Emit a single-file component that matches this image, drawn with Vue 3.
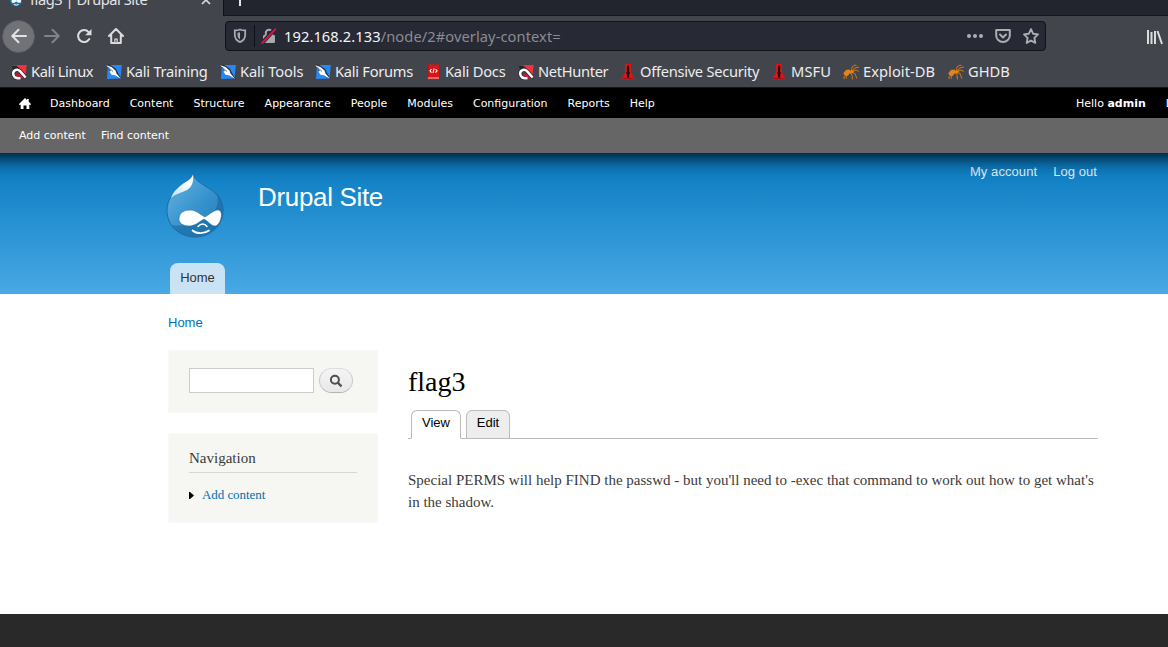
<script setup>
const bookmarks = [
  { label: 'Kali Linux', icon: 'dragon', width: 95, tracking: -0.38 },
  { label: 'Kali Training', icon: 'blade', width: 114, tracking: -0.25 },
  { label: 'Kali Tools', icon: 'blade', width: 95, tracking: -0.1 },
  { label: 'Kali Forums', icon: 'blade', width: 110, tracking: -0.27 },
  { label: 'Kali Docs', icon: 'book', width: 93, tracking: -0.2 },
  { label: 'NetHunter', icon: 'dragon', width: 102, tracking: -0.33 },
  { label: 'Offensive Security', icon: 'tower', width: 151, tracking: -0.28 },
  { label: 'MSFU', icon: 'tower', width: 72, tracking: 0.1 },
  { label: 'Exploit-DB', icon: 'ant', width: 105, tracking: 0.06 },
  { label: 'GHDB', icon: 'ant', width: 62, tracking: 0 },
]
const adminLinks = ['Dashboard', 'Content', 'Structure', 'Appearance', 'People', 'Modules', 'Configuration', 'Reports', 'Help']
</script>

<template>
  <div class="window">
    <div class="tabstrip">
      <div class="tab">
        <svg class="favicon" width="16" height="16" viewBox="0 0 16 16">
          <path d="M8 0C8 3 2 4 2 9.200a6 6 0 0 0 12 0C14 4 8 3 8 0z" fill="#1278b8" />
          <path d="M3.500 10c0-2 2.500-2 4.700-.5 2-1.500 4.800-2 4.800.5 0 2.500-2.500 2.200-4.700.5C6 12.500 3.500 12.500 3.500 10z" fill="#fff" />
          <path d="M6 13.500q2.500 1.200 4.500 0" stroke="#fff" fill="none" />
        </svg>
        <span class="tab-title">flag3 | Drupal Site</span>
        <svg class="close" width="10" height="10" viewBox="0 0 10 10"><path d="M1 1l8 8M9 1L1 9" stroke="#d9d9da" stroke-width="1.700" /></svg>
      </div>
      <div class="tab-rest">
        <svg width="14" height="14" viewBox="0 0 14 14"><path d="M7 0v14M0 7h14" stroke="#e5e5e6" stroke-width="2" /></svg>
      </div>
    </div>

    <div class="toolbar">
      <div class="back">
        <svg width="16" height="16" viewBox="0 0 16 16" fill="none" stroke="#e2e2e3" stroke-width="2" stroke-linecap="round" stroke-linejoin="round"><path d="M15 8H1.500M7.500 1.800L1.300 8l6.200 6.200" /></svg>
      </div>
      <svg class="fwd" width="16" height="16" viewBox="0 0 16 16" fill="none" stroke="#828389" stroke-width="2" stroke-linecap="round" stroke-linejoin="round"><path d="M1 8h13.500M8.500 1.800L14.700 8l-6.200 6.200" /></svg>
      <svg class="reload" width="16" height="16" viewBox="0 0 16 16"><path d="M13.300 11.100A6 6 0 1 1 12.600 4.100" fill="none" stroke="#dcdcdc" stroke-width="2" stroke-linecap="round" /><path d="M15.500 1v6.300H9.200z" fill="#dcdcdc" /></svg>
      <svg class="house" width="16" height="16" viewBox="0 0 16 16" fill="none" stroke="#dcdcdc" stroke-width="2" stroke-linecap="round" stroke-linejoin="round"><path d="M1 8l7-7 7 7M3.200 7v8h9.600V7" /><path d="M8 14v-3.500" stroke-width="3.400" stroke-linecap="butt" /><path d="M8 12v2" stroke="#43454c" stroke-width="1" /></svg>
      <div class="urlbar">
        <svg class="shield" width="14" height="16" viewBox="0 0 14 16"><path d="M7 1.500c1.700.7 3.600 1 5.200 1v4.300c0 3.500-2 6-5.200 7.300C3.800 12.800 1.800 10.300 1.800 6.800V2.500c1.600 0 3.500-.3 5.200-1z" fill="none" stroke="#a9aaae" stroke-width="1.800" /><path d="M7 4.300c-.8.300-1.600.4-2.500.5v2.300c0 2 .8 3.300 2.500 4.300z" fill="#a9aaae" /></svg>
        <span class="sep"></span>
        <svg class="lock" width="16" height="16" viewBox="0 0 16 16"><rect x="2" y="7" width="12" height="8" rx="1.200" fill="#a9aaae" /><path d="M4.800 7V5a3.200 3.200 0 0 1 6.400 0v2" fill="none" stroke="#a9aaae" stroke-width="2" /><path d="M.5 15.700L14.300.7" stroke="#272935" stroke-width="4" /><path d="M1.200 15L14.200 1.300" stroke="#ee0b44" stroke-width="1.900" stroke-linecap="round" /></svg>
        <span class="url"><b>192.168.2.133</b>/node/2#overlay-context=</span>
        <svg class="dots" width="16" height="16" viewBox="0 0 16 16" fill="#adaeb2"><circle cx="2" cy="8" r="2" /><circle cx="8" cy="8" r="2" /><circle cx="14" cy="8" r="2" /></svg>
        <svg class="pocket" width="16" height="16" viewBox="0 0 16 16" fill="none" stroke="#adaeb2" stroke-width="2" stroke-linecap="round" stroke-linejoin="round"><path d="M1.200 2h13.600v5.500a6.800 6.500 0 0 1-13.600 0z" /><path d="M5 6.500l3 3 3-3" /></svg>
        <svg class="star" width="16" height="16" viewBox="0 0 16 16" fill="none" stroke="#adaeb2" stroke-width="1.900" stroke-linejoin="round"><path d="M8 1.200l2.100 4.500 4.900.7-3.600 3.500.9 5L8 12.500l-4.300 2.400.9-5L1 6.400l4.900-.7z" /></svg>
      </div>
      <svg class="library" width="16" height="16" viewBox="0 0 16 16" stroke="#dcdcdc" stroke-width="2"><path d="M1 1v14M4.500 3v12M8 2V15M10.500 2l4.500 13" /></svg>
    </div>

    <div class="bookmarks">
      <div v-for="b in bookmarks" :key="b.label" class="bookmark" :style="{ width: b.width + 'px', letterSpacing: b.tracking + 'px' }">
        <svg v-if="b.icon === 'dragon'" width="16" height="16" viewBox="0 0 16 16"><path d="M2.500 1.200L15.800 1l-1.600 11.500L8 6z" fill="#f5313c" /><path d="M.5 2.500L5 1.500l2.500 2 2 3-6 .5z" fill="#24272c" /><path d="M9.500 14C5 15.500 2 12.800 2.200 9.400 2.500 5.600 6.500 4.600 9 7l5.600 6.500" fill="none" stroke="#26262a" stroke-width="3.800" /><path d="M5 12.500V9l3 .5 5 4.500-3 .5z" fill="#c5162c" /><path d="M9.500 14C5 15.200 2 12.700 2.200 9.400 2.500 5.800 6.500 4.800 9 7.200l5.600 6.300" fill="none" stroke="#fff" stroke-width="2.500" /></svg>
        <svg v-else-if="b.icon === 'blade'" width="16" height="16" viewBox="0 0 16 16"><path d="M2 1h13.800l-1.300 13.500L1 15z" fill="#278af4" /><path d="M0 .5l4 .2 6 4 2 4 4 7-8-5-4-3.500z" fill="#25344d" /><path d="M.3 1.200L5.500 3l4 3.500 1 3 4.500 5.200-6.300-3.500-3.200-.4L3.500 7.500 5 7z" fill="#fff" /><path d="M2 3l5 4.500" stroke="#52657c" stroke-width=".8" /></svg>
        <svg v-else-if="b.icon === 'book'" width="16" height="16" viewBox="0 0 16 16"><path d="M3 .5h11v15H3.500a1.500 1.500 0 0 1-1.500-1.500V1.500z" fill="#d91519" /><path d="M3 13.500h11v1H3z" fill="#eebfbe" /><path d="M3 .5v12.700" stroke="#a50c13" /><path d="M6.500 5L5 6.800l1.500 1.800M10.500 5L12 6.800l-1.500 1.800M9 4.500L8 9" fill="none" stroke="#fff" stroke-width="1.100" /></svg>
        <svg v-else-if="b.icon === 'tower'" width="16" height="16" viewBox="0 0 16 16"><path d="M5 0h6v8.500l3.800 7H1.200L5 8.500z" fill="#d9171b" /><path d="M7.300 1.500h1.500l.6 2-.4 3.500 1 2-1 2 .3 2.500H6.800l.4-2.500-1.100-2 1-2-.3-3.500z" fill="#260808" /><path d="M2.500 14.500h11" stroke="#ac0a12" /></svg>
        <svg v-else width="16" height="16" viewBox="0 0 16 16" fill="none" stroke="#cf7817" stroke-width="1"><path d="M8.500 7L9 3l3-2 1.500.5M10 7l1.500-3L16 3M10 7.500l3-1.500 2.800 1.500M9 8.500l3 1 1.800 5M7.500 9l1.500 2 .5 4.500M3.500 11L1 12.500V15M5 10.500l-1.500 2-.5 2.300" /><path d="M.2 9.500L3 6l3-.5 1.500 1L10 6.200l.7 2-2 1.300-2-.3-1.400 2-2.500 1z" fill="#e58316" stroke="none" /></svg>
        <span>{{ b.label }}</span>
      </div>
    </div>

    <div class="page">
      <div class="admin">
        <div class="admin-menu">
          <svg class="admin-home" width="12" height="11" viewBox="0 0 12 11"><path d="M6 0l2 2V.9h1.700v2.800L12 6v.7h-1.700V11H7.500V7.500h-3V11H1.700V6.700H0V6z" fill="#fff" /></svg>
          <a v-for="l in adminLinks" :key="l">{{ l }}</a>
          <div class="admin-user"><span>Hello <strong>admin</strong></span><a>Log out</a></div>
        </div>
        <div class="shortcuts"><a>Add content</a><a>Find content</a></div>
      </div>

      <header class="header">
        <div class="user-menu"><a>My account</a><a>Log out</a></div>
        <div class="brand">
          <svg class="logo" width="58" height="65" viewBox="0 0 58 65">
            <defs>
              <linearGradient id="drop" x1="0" y1="0" x2="1" y2="1"><stop offset="0" stop-color="#69b5e3" /><stop offset=".55" stop-color="#3592cd" /><stop offset="1" stop-color="#2579b3" /></linearGradient>
              <linearGradient id="shine" x1="1" y1="0" x2="0" y2="1"><stop offset=".3" stop-color="#fff" /><stop offset="1" stop-color="#b8def4" /></linearGradient>
            </defs>
            <path d="M27 .5c1 6 7 9 13 13 9 5 17 12 17 24C57 53 44 64 29 64S1 53 1 37.500C1 27 7 19 15 13.500 21 9 26 7 27 .5z" fill="url(#drop)" stroke="#1b679b" stroke-width=".9" />
            <path d="M50 20c4 9 1 18-8 24-10 6-21 10-37 8 5 7 13 11.500 24 11.500 15 0 27.500-11 27.500-26 0-7-2-13-6.500-17.500z" fill="#1768a1" opacity=".6" />
            <path d="M27 1c1 7-1 13-6 16-6 3-12 4-16 8 2-7 8-11 13-15 5-3 8-5 9-9z" fill="url(#shine)" />
            <path d="M13 46c0-6 5-9 11-9 6 0 11 5 15 7 5-3 9-7 13-7 3 0 4 4 3 8-1 5-4 8-6 8-4 0-7-5-11-7-5 3-9 7-15 7-6 0-10-3-10-7z" fill="#fff" stroke="#25648e" stroke-width=".5" />
            <path d="M32 53.500c3-3.200 6.500-3.200 9 0" fill="none" stroke="#fff" stroke-width="1.500" stroke-linecap="round" />
            <path d="M26.500 57.500c4 3.500 12 3.500 16.500 0" fill="none" stroke="#fff" stroke-width="1.700" stroke-linecap="round" />
          </svg>
          <span class="site-name">Drupal Site</span>
        </div>
        <div class="main-tab">Home</div>
      </header>

      <main class="main">
        <div class="crumb">Home</div>
        <div class="columns">
          <aside class="sidebar">
            <div class="block search">
              <div class="field"></div>
              <div class="go"><svg width="14" height="14" viewBox="0 0 14 14" fill="none" stroke="#4f4f4f"><circle cx="5.900" cy="5.700" r="4" stroke-width="2" /><path d="M8.700 8.700l3.800 3.600" stroke-width="2.300" /></svg></div>
            </div>
            <div class="block nav">
              <h2>Navigation</h2>
              <div class="leaf"><svg width="5" height="7" viewBox="0 0 5 7"><path d="M0 0h1l4 3.500L1 7H0z" fill="#000" /></svg><a>Add content</a></div>
            </div>
          </aside>
          <article class="content">
            <h1>flag3</h1>
            <div class="tabs"><div class="ptab on">View</div><div class="ptab">Edit</div></div>
            <p>Special PERMS will help FIND the passwd - but you'll need to -exec that command to work out how to get what's<br />in the shadow.</p>
          </article>
        </div>
      </main>
      <footer class="footer"></footer>
    </div>
  </div>
</template>

<style>
html, body { margin: 0; overflow: hidden; }
</style>

<style scoped>
.window { width: 1168px; height: 647px; overflow: hidden; background: #fff; display: flex; flex-direction: column; }
.window * { box-sizing: border-box; }
svg { display: block; flex: none; }
.tabstrip { height: 16px; display: flex; flex: none; font: 14.67px/20px "Noto Sans", sans-serif; overflow: hidden; background: #43454c; }
.tab { width: 223px; height: 16px; flex: none; display: flex; align-items: flex-start; color: #e4e4e5; }
.favicon { margin: -9px 6px 0 8px; }
.tab-title { margin-top: -11px; width: 171px; white-space: nowrap; letter-spacing: -.47px; }
.close { margin-top: -5px; }
.tab-rest { flex: 1; background: #23252e; border-left: 1px solid #101217; border-bottom: 1px solid #15171c; }
.tab-rest svg { margin: -8px 0 0 9px; }
.toolbar { height: 41px; flex: none; background: #43454c; display: flex; align-items: center; }
.back { width: 33px; height: 33px; margin-left: 2px; margin-top: -1px; border-radius: 50%; background: #717277; border: 1px solid #5c5d62; display: flex; align-items: center; justify-content: center; }
.fwd { margin: -1px 0 0 9px; }
.reload { margin: -2px 0 0 16px; }
.house { margin: -1px 0 0 16px; }
.urlbar { width: 821px; height: 30px; margin-left: 101px; margin-top: -1px; background: #272935; border: 1px solid #101218; border-radius: 4px; display: flex; align-items: center; }
.shield { margin-left: 7px; }
.sep { width: 1px; height: 22px; margin: 0 6px 0 7px; background: #0e1017; }
.lock { margin-right: 7px; }
.url { flex: 1; font: 14.67px/20px "Noto Sans", sans-serif; color: #8b8c92; white-space: nowrap; letter-spacing: .08px; }
.url b { font-weight: 400; color: #f6f6f7; }
.pocket { margin-left: 12px; }
.star { margin: 0 6px 0 12px; }
.library { margin-left: 101px; }
.bookmarks { height: 31px; flex: none; background: #43454c; border-bottom: 1px solid #15161a; padding-left: 11px; display: flex; align-items: center; font: 14.67px/20px "Noto Sans", sans-serif; color: #ededee; }
.bookmark { flex: none; display: flex; align-items: center; gap: 4px; white-space: nowrap; }
.bookmark span { margin-top: -2px; }
.page { position: relative; display: flex; flex-direction: column; flex: 1; font-family: "Liberation Sans", sans-serif; }
.admin { position: relative; z-index: 1; margin: 0 -40px; font: 11px/13px "DejaVu Sans", sans-serif; box-shadow: 0 3px 20px #000; clip-path: inset(0 0 -30px 0); }
.admin-menu { height: 30px; padding: 0 40px 0 59px; background: #000; color: #fff; display: flex; align-items: center; gap: 20px; white-space: nowrap; }
.admin-home + a { margin-left: -1px; }
.admin-user { width: 92px; margin-left: auto; display: flex; gap: 20px; overflow: hidden; }
.shortcuts { height: 35px; background: #666; padding-left: 59px; display: flex; gap: 15px; align-items: center; color: #fff; }
.header { height: 141px; flex: none; padding: 0 71px 0 166px; background: linear-gradient(#0779bf, #48a9e4); display: flex; flex-direction: column; color: #fff; }
.user-menu { height: 20px; padding-top: 11px; display: flex; justify-content: flex-end; gap: 16px; font-size: 13px; line-height: 16px; letter-spacing: .07px; color: #e1f1fa; }
.brand { height: 90px; display: flex; align-items: flex-start; }
.site-name { margin: 9px 0 0 34px; font-size: 26px; line-height: 30px; letter-spacing: -.33px; }
.main-tab { width: 55px; height: 31px; margin-left: 4px; background: #c9e3f5; border-radius: 8px 8px 0 0; text-align: center; font-size: 13px; line-height: 29px; color: #333; }
.main { height: 320px; flex: none; padding: 20px 70px 0 168px; background: #fff; }
.crumb { height: 36px; font-size: 13px; line-height: 17px; color: #0071b3; }
.columns { display: flex; gap: 30px; }
.sidebar { width: 210px; flex: none; display: flex; flex-direction: column; gap: 20px; font-family: "Liberation Serif", serif; }
.block { background: #f6f6f2; border: 1px solid #f9f9f9; padding: 0 20px; }
.search { height: 63px; display: flex; gap: 5px; padding-top: 17px; }
.field { width: 125px; height: 25px; background: #fff; border: 1px solid #ccc; }
.go { width: 34px; height: 25px; border: 1px solid #cacaca; border-color: #dedede #cacaca #b5b5b5; border-radius: 13px; background: linear-gradient(#f4f4f4, #e8e8e8); display: flex; align-items: center; justify-content: center; }
.nav { height: 90px; }
.nav h2 { margin: 14px 0; height: 25px; border-bottom: 1px solid #d6d6d6; font-weight: 400; font-size: 15px; line-height: 20px; color: #3b3b3b; }
.leaf { display: flex; align-items: center; gap: 8px; font-size: 13px; line-height: 16px; letter-spacing: -.06px; color: #0071b3; }
.content { flex: 1; font-family: "Liberation Serif", serif; color: #3b3b3b; }
h1 { margin: 15px 0 0; height: 45px; font-weight: 400; font-size: 28px; line-height: 34px; color: #000; }
.tabs { height: 29px; padding-left: 3px; border-bottom: 1px solid #bbb; display: flex; gap: 5px; }
.ptab { height: 29px; width: 44px; text-align: center; font: 13px/24px "Liberation Sans", sans-serif; color: #000; background: #ededed; border: 1px solid #bbb; border-radius: 6px 6px 0 0; }
.ptab.on { width: 50px; background: #fff; border-bottom-color: #fff; }
p { margin: 30px 0 0; font-size: 15px; line-height: 22px; white-space: nowrap; }
.footer { flex: 1; background: #292929; }
</style>
